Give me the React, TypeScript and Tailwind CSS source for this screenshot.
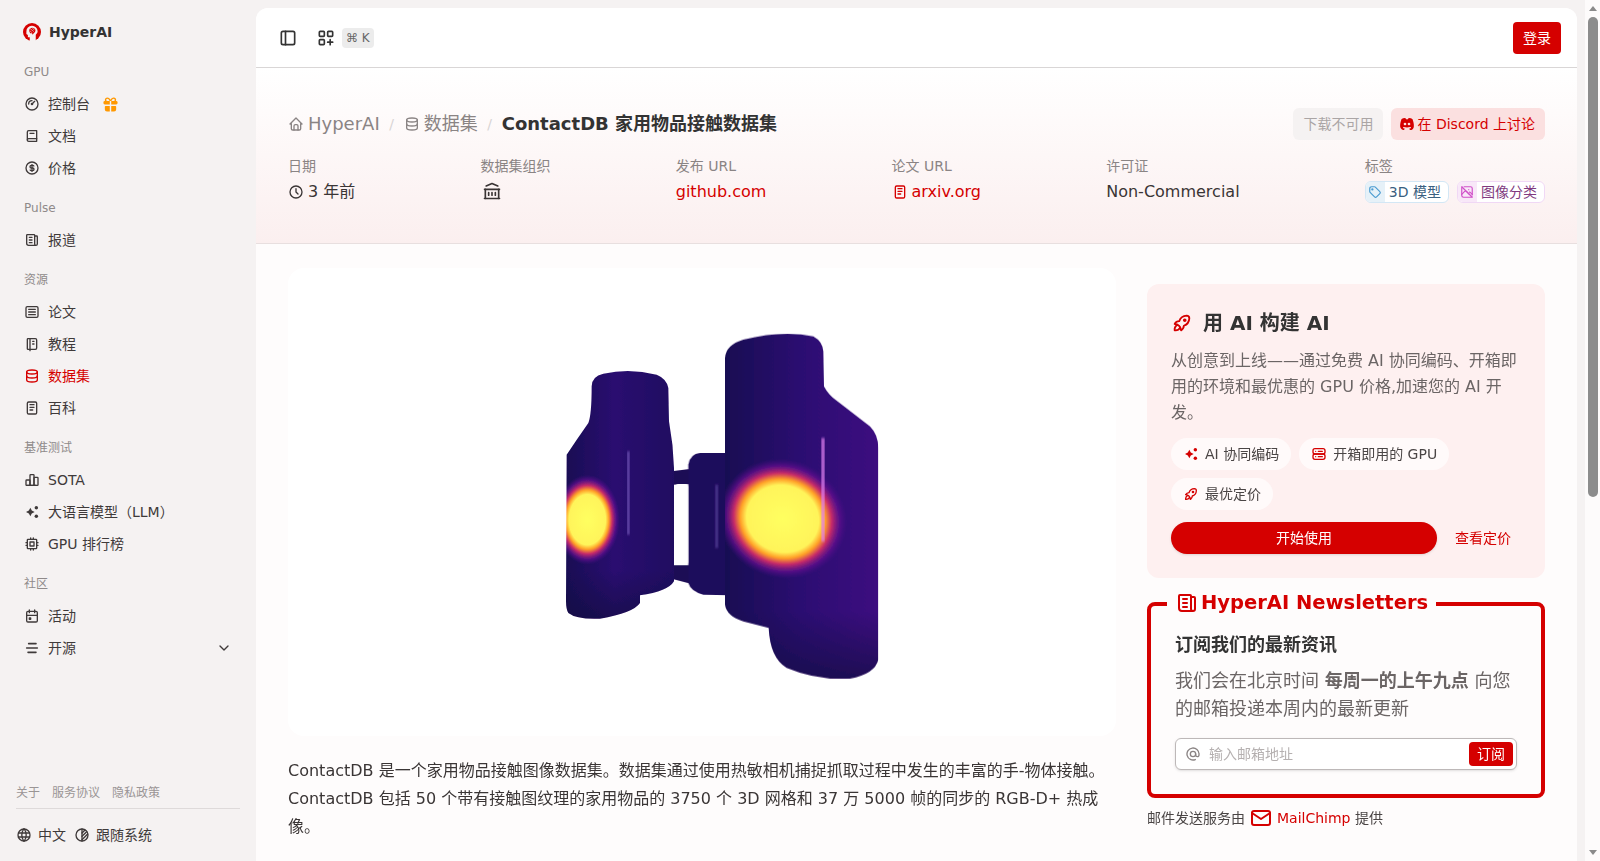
import {
  TbGauge, TbBook2, TbCoin, TbNews, TbArticle, TbNotebook, TbDatabase, TbNotes, TbChartBar, TbCpu,
  TbCalendarEvent, TbChevronDown, TbWorld, TbCircleHalf2, TbLayoutSidebar, TbLayoutGridAdd,
  TbHome, TbClock, TbBuildingBank, TbTag, TbPhotoOff, TbBrandDiscordFilled, TbRocket, TbServer2, TbAt, TbMail, TbGiftFilled,
} from "react-icons/tb"
import type { ReactNode } from "react"

// sparkle with dots, used for LLM and the AI coding chip
function Sparkle({ className }: { className?: string }) {
  return (
    <svg viewBox="0 0 24 24" fill="currentColor" className={className}>
      <path d="M9.5 5.5l2.2 4.3 4.3 2.2-4.3 2.2-2.2 4.3-2.2-4.3L3 12l4.3-2.2z" />
      <circle cx="18.5" cy="5.5" r="2.6" />
      <circle cx="18.5" cy="18.5" r="2.6" />
    </svg>
  )
}

function OpenSourceIcon() {
  return (
    <svg viewBox="0 0 24 24" fill="none" stroke="currentColor" strokeWidth="2.4" strokeLinecap="round" className="w-4 h-4">
      <path d="M7 5.5h11M4 12h16M6 18.5h12" />
    </svg>
  )
}

function Logo() {
  return (
    <svg viewBox="0 0 24 24" className="w-[18px] h-[18px]">
      <circle cx="12" cy="12" r="12" fill="#d50000" />
      <path d="M4.5 11.5a7.5 7.5 0 0 1 15 -.5c0 2.500-1.500 3.500-2.500 4.500V24H9v-5H6.500v-3L4.500 14.500z" fill="#f5f2f2" />
      <path d="M8 10a4.500 4.500 0 0 1 8.500-1c.5 2.500-1 4-2.500 5l-1 1.500-1-2H9.500z" fill="#d50000" />
      <path d="M9.500 7.500l5 4M12 6l3 3.500M9 10l3 3" stroke="#f5f2f2" strokeWidth=".8" />
    </svg>
  )
}

function NavItem({ icon, label, active, children }: { icon: ReactNode; label: string; active?: boolean; children?: ReactNode }) {
  return (
    <div className={`flex items-center h-8 pl-6 pr-6 gap-2 text-sm ${active ? "text-[#d50000]" : "text-[#3f3a3a]"}`}>
      <span className="w-4 flex justify-center text-[16px] shrink-0">{icon}</span>
      <span>{label}</span>
      {children}
    </div>
  )
}

function NavGroup({ title, children }: { title: string; children: ReactNode }) {
  return (
    <div className="mb-4">
      <div className="h-4 leading-4 pl-6 mb-2 text-xs text-[#8f8a8a]">{title}</div>
      {children}
    </div>
  )
}

function Meta({ label, children }: { label: string; children: ReactNode }) {
  return (
    <div className="flex flex-col">
      <div className="h-5 leading-5 text-sm text-[#8a8484]">{label}</div>
      <div className="h-8 flex items-center text-base text-[#3a3535]">{children}</div>
    </div>
  )
}

function Chip({ icon, label }: { icon: ReactNode; label: string }) {
  return (
    <div className="h-8 px-3 rounded-full bg-[#fffafa] flex items-center gap-[6px] text-sm text-[#4a4545]">
      <span className="text-[#d50000] text-[16px] flex">{icon}</span>
      {label}
    </div>
  )
}

function Slash() {
  return <span className="w-6 text-center text-sm text-[#d8d4d4]">/</span>
}

function Binoculars() {
  return (
    <svg viewBox="0 0 1260 1170" className="w-[420px] h-[390px]">
      <defs>
        <linearGradient id="body" x1="0" x2="1" y1="0" y2="0">
          <stop offset="0" stopColor="#180a52" />
          <stop offset="0.45" stopColor="#2a0c70" />
          <stop offset="1" stopColor="#1f0a60" />
        </linearGradient>
        <linearGradient id="shade" x1="0" x2="1" y1="0" y2="0">
          <stop offset="0" stopColor="#180a52" />
          <stop offset="0.5" stopColor="#2c0c72" />
          <stop offset="1" stopColor="#3d0f80" />
        </linearGradient>
        <linearGradient id="bottomDark" x1="0" x2="0" y1="0" y2="1">
          <stop offset="0" stopColor="#120640" stopOpacity="0" />
          <stop offset="0.8" stopColor="#120640" stopOpacity="0" />
          <stop offset="1" stopColor="#120640" stopOpacity="0.7" />
        </linearGradient>
        <radialGradient id="hot">
          <stop offset="0" stopColor="#ffff60" />
          <stop offset="0.56" stopColor="#fff45a" />
          <stop offset="0.66" stopColor="#ffa028" />
          <stop offset="0.76" stopColor="#c82c68" />
          <stop offset="0.88" stopColor="#6a1290" stopOpacity="0.7" />
          <stop offset="1" stopColor="#4a1088" stopOpacity="0" />
        </radialGradient>
        <filter id="soft"><feGaussianBlur stdDeviation="2" /></filter>
        <filter id="line"><feGaussianBlur stdDeviation="3" /></filter>
        <clipPath id="leftClip">
          <path d="M275 235Q275 205 310 197Q390 180 470 200Q500 212 505 240L507 340Q520 410 522 480L522 820Q505 850 420 862L420 885Q400 915 300 932Q230 935 205 915Q198 905 198 880L200 440Q230 395 265 345Q275 320 275 235Z" />
        </clipPath>
        <clipPath id="rightClip">
          <path d="M675 150Q678 110 730 95Q850 65 940 85Q968 100 970 130L972 235Q985 260 1010 278L1110 355Q1135 380 1135 420L1135 1055Q1125 1098 1050 1112Q950 1118 860 1080Q810 1050 806 960L730 940Q680 925 675 890Z" />
        </clipPath>
      </defs>
      <g filter="url(#soft)">
        <path d="M515 490L575 482L575 528L515 530ZM515 772L575 772L575 828L515 812Z" fill="#1d0a55" />
        <path d="M565 470Q570 438 600 435L690 435L690 862L610 860Q572 850 565 825Z" fill="#1e0a5c" />
        <rect x="525" y="528" width="40" height="243" rx="10" fill="#fff" />
        <g clipPath="url(#leftClip)">
          <rect x="190" y="180" width="340" height="760" fill="url(#body)" />
          <rect x="190" y="180" width="340" height="760" fill="url(#bottomDark)" />
          <ellipse cx="262" cy="635" rx="98" ry="135" fill="url(#hot)" />
          <rect x="382" y="430" width="6" height="250" fill="#7a60c0" filter="url(#line)" />
        </g>
        <g clipPath="url(#rightClip)">
          <rect x="670" y="70" width="470" height="1050" fill="url(#shade)" />
          <rect x="670" y="70" width="470" height="1050" fill="url(#bottomDark)" />
          <ellipse cx="848" cy="632" rx="195" ry="178" transform="rotate(20 848 632)" fill="url(#hot)" />
          <rect x="965" y="390" width="8" height="310" fill="#e080f0" filter="url(#line)" />
        </g>
        <rect x="647" y="530" width="6" height="190" fill="#5a48a0" filter="url(#line)" />
      </g>
    </svg>
  )
}

export default function App() {
  return (
    <div className="h-screen overflow-hidden flex bg-[#f5f2f2] font-['DejaVu_Sans','Noto_Sans_CJK_SC',sans-serif]">
      {/* Sidebar */}
      <aside className="w-64 shrink-0 flex flex-col">
        <div className="h-16 flex items-center gap-2 pl-[23px] font-bold text-sm text-[#333]">
          <Logo />
          HyperAI
        </div>
        <NavGroup title="GPU">
          <NavItem icon={<TbGauge />} label="控制台">
            <TbGiftFilled className="ml-1 text-[17px] text-[#ff9800]" />
          </NavItem>
          <NavItem icon={<TbBook2 />} label="文档" />
          <NavItem icon={<TbCoin />} label="价格" />
        </NavGroup>
        <NavGroup title="Pulse">
          <NavItem icon={<TbNews />} label="报道" />
        </NavGroup>
        <NavGroup title="资源">
          <NavItem icon={<TbArticle />} label="论文" />
          <NavItem icon={<TbNotebook />} label="教程" />
          <NavItem icon={<TbDatabase />} label="数据集" active />
          <NavItem icon={<TbNotes />} label="百科" />
        </NavGroup>
        <NavGroup title="基准测试">
          <NavItem icon={<TbChartBar />} label="SOTA" />
          <NavItem icon={<Sparkle className="w-4 h-4" />} label="大语言模型（LLM）" />
          <NavItem icon={<TbCpu />} label="GPU 排行榜" />
        </NavGroup>
        <NavGroup title="社区">
          <NavItem icon={<TbCalendarEvent />} label="活动" />
          <NavItem icon={<OpenSourceIcon />} label="开源">
            <TbChevronDown className="ml-auto text-[16px]" />
          </NavItem>
        </NavGroup>
        <div className="mt-auto px-4">
          <div className="flex gap-3 h-8 items-center text-xs text-[#9a9595] border-b border-[#dedada]">
            <span>关于</span>
            <span>服务协议</span>
            <span>隐私政策</span>
          </div>
          <div className="h-[52px] flex items-center gap-2 text-sm text-[#3f3a3a]">
            <span className="flex items-center gap-[6px]"><TbWorld className="text-[16px]" />中文</span>
            <span className="flex items-center gap-[6px]"><TbCircleHalf2 className="text-[16px]" />跟随系统</span>
          </div>
        </div>
      </aside>

      {/* Main */}
      <main className="flex-1 min-w-0 mt-2 mr-2 rounded-t-xl bg-[#fefcfc] overflow-hidden flex flex-col">
        <header className="h-[60px] shrink-0 border-b border-[#d9d6d6] bg-white flex items-center pl-[22px] pr-4">
          <TbLayoutSidebar className="text-[20px] text-[#333]" />
          <TbLayoutGridAdd className="ml-[18px] text-[20px] text-[#333]" />
          <span className="ml-[6px] h-5 px-1 rounded bg-[#ececec] text-xs leading-5 text-[#666]">⌘ K</span>
          <button className="ml-auto h-8 w-12 rounded bg-[#d50000] text-white text-sm">登录</button>
        </header>

        <section className="h-[176px] shrink-0 px-8 pt-10 border-b border-[#e8dfdf] bg-gradient-to-b from-white to-[#fbefef]">
          <div className="flex items-center h-8">
            <div className="flex items-center text-lg text-[#8a8484]">
              <TbHome className="text-[16px] mr-1" />HyperAI
              <Slash />
              <TbDatabase className="text-[16px] mr-1" />数据集
              <Slash />
              <span className="font-bold text-[#333]">ContactDB 家用物品接触数据集</span>
            </div>
            <div className="ml-auto flex gap-2 text-sm">
              <span className="h-8 px-[10px] rounded-md bg-[#f5f2f2] text-[#aaa5a5] flex items-center">下载不可用</span>
              <span className="h-8 pl-2 pr-[10px] rounded-md bg-[#fbe0e0] text-[#d50000] flex items-center gap-[2px]">
                <TbBrandDiscordFilled className="text-[16px]" />在 Discord 上讨论
              </span>
            </div>
          </div>
          <div className="mt-4 flex justify-between">
            <Meta label="日期"><TbClock className="mr-1 text-[16px]" />3 年前</Meta>
            <Meta label="数据集组织"><TbBuildingBank className="ml-[1px] mb-[2px] text-[20px]" /></Meta>
            <Meta label="发布 URL"><span className="text-[#d50000]">github.com</span></Meta>
            <Meta label="论文 URL"><span className="flex items-center gap-1 text-[#d50000]"><TbNotes className="text-[16px]" />arxiv.org</span></Meta>
            <Meta label="许可证">Non-Commercial</Meta>
            <Meta label="标签">
              <div className="flex gap-2 text-sm">
                <span className="h-[22px] flex items-center rounded-md border border-[#d3e7f5] bg-white text-[#3a6080] overflow-hidden">
                  <span className="h-full w-[19px] flex items-center justify-center bg-[#e6f1f8] text-[#4a9bd0]"><TbTag /></span>
                  <span className="pl-1 pr-[7px]">3D 模型</span>
                </span>
                <span className="h-[22px] flex items-center rounded-md border border-[#f0d8f5] bg-white text-[#803a80] overflow-hidden">
                  <span className="h-full w-[19px] flex items-center justify-center bg-[#f8e8f8] text-[#d050c8]"><TbPhotoOff /></span>
                  <span className="pl-1 pr-[7px]">图像分类</span>
                </span>
              </div>
            </Meta>
          </div>
        </section>

        <div className="flex-1 flex gap-[31px] pl-8 pr-8 min-h-0">
          <div className="w-[828px] shrink-0 pt-6">
            <div className="h-[468px] rounded-2xl bg-white flex items-center justify-center pl-[16px] pt-[2px]">
              <Binoculars />
            </div>
            <p className="mt-[21px] text-base leading-7 text-[#3a3535]">
              ContactDB 是一个家用物品接触图像数据集。数据集通过使用热敏相机捕捉抓取过程中发生的丰富的手-物体接触。ContactDB 包括 50 个带有接触图纹理的家用物品的 3750 个 3D 网格和 37 万 5000 帧的同步的 RGB-D+ 热成像。
            </p>
          </div>

          <div className="flex-1 min-w-0 pt-[40px]">
            <div className="h-[294px] rounded-xl bg-[#fef0f0] px-6 pt-[25px]">
              <h3 className="flex items-center gap-[10px] text-xl font-bold leading-7 text-[#333]">
                <TbRocket className="text-[#d50000] text-[22px]" />用 AI 构建 AI
              </h3>
              <p className="mt-[11px] text-base leading-[26px] text-[#6b6565]">
                从创意到上线——通过免费 AI 协同编码、开箱即用的环境和最优惠的 GPU 价格,加速您的 AI 开发。
              </p>
              <div className="mt-3 flex flex-wrap gap-2">
                <Chip icon={<Sparkle className="w-4 h-4" />} label="AI 协同编码" />
                <Chip icon={<TbServer2 />} label="开箱即用的 GPU" />
                <Chip icon={<TbRocket />} label="最优定价" />
              </div>
              <div className="mt-3 flex items-center">
                <button className="w-[266px] h-8 rounded-full bg-[#d50000] text-white text-sm shadow-sm">开始使用</button>
                <span className="ml-[18px] text-sm text-[#d50000]">查看定价</span>
              </div>
            </div>

            <fieldset className="mt-[13px] h-[207px] border-4 border-[#d50000] rounded-lg px-6 pb-4">
              <legend className="-ml-2 px-2 pb-[2px] flex items-center gap-[2px] text-[19.5px] font-bold leading-6 text-[#d50000]">
                <TbNews className="text-[24px]" />HyperAI Newsletters
              </legend>
              <div className="mt-[14px] text-lg font-bold leading-7 text-[#333]">订阅我们的最新资讯</div>
              <p className="mt-[8px] text-lg leading-7 text-[#6b6565]">
                我们会在北京时间 <b>每周一的上午九点</b> 向您的邮箱投递本周内的最新更新
              </p>
              <div className="mt-[15px] h-8 rounded-md border border-[#bdb8b8] shadow-sm bg-white flex items-center pl-[9px] pr-[3px] text-sm">
                <TbAt className="text-[16px] text-[#8a8484]" />
                <span className="ml-[8px] text-[#b5b0b0]">输入邮箱地址</span>
                <button className="ml-auto h-6 w-11 rounded bg-[#d50000] text-white text-sm">订阅</button>
              </div>
            </fieldset>

            <div className="mt-2 flex items-center text-sm text-[#4a4545]">
              邮件发送服务由
              <TbMail className="mx-1 text-[24px] text-[#d50000]" />
              <span className="text-[#d50000]">MailChimp</span>&nbsp;提供
            </div>
          </div>
        </div>
      </main>

      {/* Window scrollbar */}
      <div className="w-[15px] shrink-0 bg-[#fdfbfb] flex flex-col items-center">
        <div className="h-[17px] flex items-center justify-center">
          <div className="border-x-[4px] border-x-transparent border-b-[5px] border-b-[#8a8a8a]" />
        </div>
        <div className="w-[10px] h-[480px] rounded-b-md rounded-t-md bg-[#8c8c8c]" />
        <div className="mt-auto h-[17px] flex items-center justify-center">
          <div className="border-x-[4px] border-x-transparent border-t-[5px] border-t-[#8a8a8a]" />
        </div>
      </div>
    </div>
  )
}
